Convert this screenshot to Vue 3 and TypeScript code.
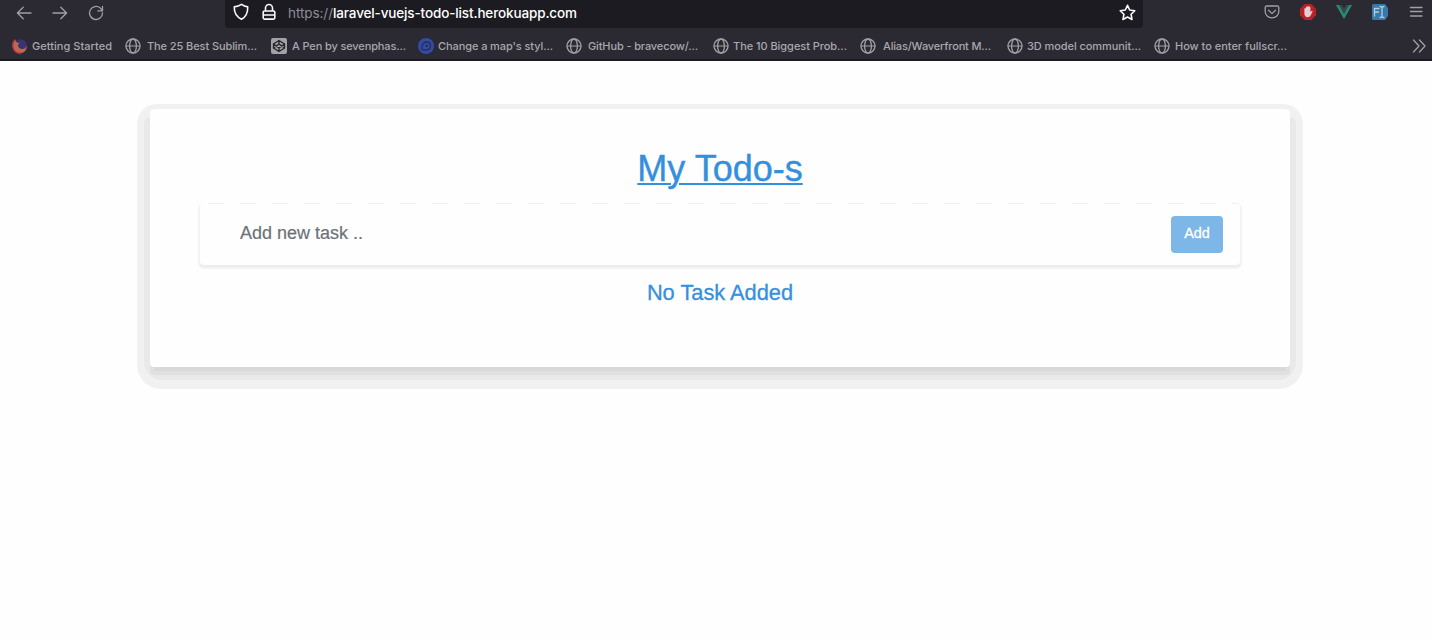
<script setup lang="ts">
import { ref } from 'vue'

interface Bookmark {
  icon: 'firefox' | 'globe' | 'pen' | 'map'
  label: string
  gap: number
  width: number
}

const bookmarks: Bookmark[] = [
  { icon: 'firefox', label: 'Getting Started', gap: 4, width: 80 },
  { icon: 'globe', label: 'The 25 Best Sublim...', gap: 6, width: 110 },
  { icon: 'pen', label: 'A Pen by sevenphas...', gap: 5, width: 114 },
  { icon: 'map', label: "Change a map's styl...", gap: 4, width: 115 },
  { icon: 'globe', label: 'GitHub - bravecow/...', gap: 6, width: 110 },
  { icon: 'globe', label: 'The 10 Biggest Prob...', gap: 4, width: 114 },
  { icon: 'globe', label: 'Alias/Waverfront M...', gap: 7, width: 108 },
  { icon: 'globe', label: '3D model communit...', gap: 4, width: 114 },
  { icon: 'globe', label: 'How to enter fullscr...', gap: 5, width: 112 },
]

const task = ref('')
</script>

<template>
  <div class="window">
    <header class="chrome">
      <div class="toolbar">
        <div class="nav">
          <svg width="16" height="16" viewBox="0 0 16 16"><path d="M15 8H1.5M7.2 2.2 1.4 8l5.8 5.8" /></svg>
          <svg width="16" height="16" viewBox="0 0 16 16"><path d="M1 8h13.5M8.8 2.2 14.6 8l-5.8 5.8" /></svg>
          <svg width="16" height="16" viewBox="0 0 16 16"><path d="M14.500 8a6.500 6.500 0 1 1-2.200-4.900l2 2.200M14.500 1.300v4.600H9.800" /></svg>
        </div>
        <div class="address">
          <svg class="shield" width="16" height="18" viewBox="0 0 16 18"><path d="M8.500 1.400c2 1.500 3.800 2.200 6.200 2.500C15 10 13.200 13.700 8.500 16.300 3.500 13.700 1 10 1.300 3.900 4 3.600 6.300 2.900 8.500 1.400Z" /></svg>
          <svg class="lock" width="14" height="18" viewBox="0 0 14 18"><path d="M3.500 8V5a3.500 3.500 0 0 1 7 0v3M2.500 8h9a1.300 1.300 0 0 1 1.300 1.300v5.500a1.300 1.300 0 0 1-1.300 1.300h-9A1.300 1.300 0 0 1 1.200 14.800V9.300A1.300 1.300 0 0 1 2.500 8ZM1.200 12h11.600" /></svg>
          <svg class="url" width="300" height="24">
            <text x="0" y="16.500" textLength="45" class="scheme">https://</text>
            <text x="45" y="16.500" textLength="244" class="host">laravel-vuejs-todo-list.herokuapp.com</text>
          </svg>
          <svg class="star" width="18" height="18" viewBox="0 0 18 18"><path d="m9.500 1.300 2.200 4.700 5.100.7-3.700 3.600.9 5.200L9.500 13 5 15.500l.9-5.200L2.200 6.700l5.100-.7Z" /></svg>
        </div>
        <div class="extensions">
          <svg width="16" height="16" viewBox="0 0 16 16"><path d="M2.500 2h11A1.300 1.300 0 0 1 14.800 3.300V7.500a6.800 6.300 0 0 1-13.600 0V3.300A1.300 1.300 0 0 1 2.500 2ZM4.500 6.300 8 9.600 11.500 6.300" /></svg>
          <svg width="16" height="16" viewBox="0 0 16 16">
            <path class="blocker" d="M4.700 0h6.600L16 4.700v6.600L11.300 16H4.700L0 11.300V4.700Z" />
            <path class="hand" d="M4.400 7.700V4.500q.8-.9 1.500 0V3q.8-.9 1.500 0v-.6q.8-.9 1.500 0V3q.8-.9 1.500 0v5.200l1-1.200q1.100-.5 1.200.4l-2 4.200Q9.800 13.300 8 13.300c-2.500 0-3.600-1.800-3.600-3.500Z" />
          </svg>
          <svg width="16" height="16" viewBox="0 0 16 16">
            <path class="vue-outer" d="M0 1h3.200L8 9.800 12.800 1H16L8 15Z" />
            <path class="vue-inner" d="M3.200 1h2.700L8 4.800 10.100 1h2.700L8 9.800Z" />
          </svg>
          <svg width="16" height="16" viewBox="0 0 16 16">
            <path class="tag" d="M1.500 0H13l3 4v8l-3 4H1.500Q0 16 0 14.500v-13Q0 0 1.500 0Z" />
            <path class="tag-mark" d="M2.500 12V4.500H7M2.500 8h4M8 2.500q2 0 2 1.200 0-1.200 2-1.200M10 3.700v8.600M8 13.500q2 0 2-1.200 0 1.200 2 1.200" />
          </svg>
          <svg width="16" height="16" viewBox="0 0 16 16"><path d="M2.500 3.500h11.500M2.500 7.500h11.500M2.500 12h11.500" /></svg>
        </div>
      </div>
      <nav class="bookmarks">
        <div v-for="item in bookmarks" :key="item.label" class="bookmark">
          <svg v-if="item.icon === 'globe'" width="16" height="16" viewBox="0 0 16 16"><circle cx="8" cy="8" r="7" /><ellipse cx="8" cy="8" rx="3.400" ry="7" /><path d="M1 8h14" class="thin" /></svg>
          <svg v-else-if="item.icon === 'firefox'" width="16" height="16" viewBox="0 0 16 16">
            <circle class="fox-core" cx="8.500" cy="7.500" r="6.300" />
            <path class="fox-flame" d="M3 1.500C.6 3.600-.2 7.500 1 10.700 2.500 14.500 6 16 9.300 15.300c3.500-.8 5.700-3.800 5.500-7.500-.8 2-2.400 3.300-4.500 3.300-3.200 0-4.600-2.500-4.200-4.500l1.600-1.400-2.900-.8Z" />
            <path class="fox-edge" d="M2.700 2C.8 4.200.2 7.500 1.300 10.500c1.300 3.400 4.500 5 7.700 4.500" />
          </svg>
          <svg v-else-if="item.icon === 'pen'" width="16" height="16" viewBox="0 0 16 16">
            <rect class="pen-tile" width="16" height="16" rx="2" />
            <path class="pen-lines" d="M8 2.500 13.500 6v4L8 13.500 2.500 10V6ZM2.500 6 8 10l5.500-4M2.500 10 8 6l5.500 4M8 2.500V6M8 10v3.500" />
          </svg>
          <svg v-else width="16" height="16" viewBox="0 0 16 16">
            <circle class="map-disc" cx="8" cy="8" r="8" />
            <path class="map-ring" d="M4.300 11.600C3 8 5 4 8.500 4c2.300 0 4 1.600 4 3.800 0 2.600-2.100 4.200-4.700 4.200Z" />
            <circle class="map-dot" cx="8.700" cy="7.700" r="1.200" />
          </svg>
          <svg class="caption" :width="item.width + 4" height="18" :style="{ marginLeft: item.gap + 'px' }">
            <text x="0" y="13.400" :textLength="item.width">{{ item.label }}</text>
          </svg>
        </div>
        <svg class="more" width="14" height="14" viewBox="0 0 14 14"><path d="m1.500 1 5.500 6-5.500 6M7.500 1 13 7l-5.500 6" /></svg>
      </nav>
    </header>

    <main class="card">
      <h1>My Todo-s</h1>
      <form class="entry" @submit.prevent>
        <input v-model="task" type="text" placeholder="Add new task .." />
        <button type="submit">Add</button>
      </form>
      <p>No Task Added</p>
    </main>
  </div>
</template>

<style>
body {
  margin: 0;
  background: #fefefe;
}
</style>

<style scoped>
.window {
  isolation: isolate;
  height: 640px;
  overflow: hidden;
  background: #fefefe;
  font-family: "Liberation Sans", Arial, sans-serif;
}
.chrome {
  box-sizing: border-box;
  height: 61px;
  background: #2b2a33;
  border-bottom: 2px solid #1b1a20;
  font-family: Inter, sans-serif;
}
svg {
  flex: none;
  overflow: visible;
  fill: none;
  stroke: #a09fa5;
  stroke-width: 1.3;
  stroke-linejoin: round;
  stroke-linecap: round;
}
svg text {
  stroke: none;
}
.toolbar {
  display: flex;
  height: 28px;
}
.nav {
  display: flex;
  gap: 20px;
  width: 209px;
  padding: 5px 0 0 16px;
}
.address {
  display: flex;
  box-sizing: border-box;
  width: 918px;
  height: 28px;
  padding-left: 8px;
  background: #1c1b22;
  border-radius: 0 0 4px 4px;
}
.address svg {
  stroke: #fafafa;
  stroke-width: 1.6;
}
.shield {
  margin-top: 3px;
}
.address .lock {
  margin: 3px 0 0 13px;
}
.address .url {
  margin: 1px 0 0 12px;
}
.scheme,
.host {
  font-size: 13.5px;
}
.scheme {
  fill: #8d8c94;
}
.host {
  fill: #fff;
  font-weight: 500;
}
.address .star {
  margin: 4px 0 0 530px;
}
.extensions {
  display: flex;
  gap: 20px;
  padding: 4px 0 0 121px;
}
.extensions .blocker { fill: #b92128; stroke: none; }
.extensions .hand { fill: #e6cdd2; stroke: none; }
.extensions .vue-outer { fill: #2f8b70; stroke: none; }
.extensions .vue-inner { fill: #34495a; stroke: none; }
.extensions .tag { fill: #3779a8; stroke: none; }
.extensions .tag-mark { stroke: #b4cddc; }
.bookmarks {
  display: grid;
  grid-template-columns: 113px 146px 147px 148px 147px 147px 147px 147px 258px 14px;
  align-items: center;
  height: 20px;
  padding: 8px 0 0 12px;
}
.bookmark {
  display: flex;
  align-items: center;
}
.bookmark .thin { stroke-width: 1.2; }
.caption text {
  fill: #a8a7ad;
  font-size: 11px;
  font-weight: 500;
}
.fox-core { fill: #3b3473; stroke: none; }
.fox-flame { fill: #bd6950; stroke: none; }
.fox-edge { stroke: #a83642; }
.pen-tile { fill: #a2a1a5; stroke: none; }
.pen-lines { stroke: #24232a; }
.map-disc { fill: #344ba0; stroke: none; }
.map-ring { stroke: #222c60; }
.map-dot { fill: #222c60; stroke: none; }

.card {
  position: relative;
  box-sizing: border-box;
  width: 1140px;
  height: 258px;
  margin: 48px 0 0 150px;
  padding: 36px 50px 0;
  border-radius: 4px;
  background: #fefefe;
  box-shadow: 0 8px 0 -4px #d9d9d9, 0 8px 0 0 #e1e1e1;
}
/* Outer shadow bands, rounder than the card itself */
.card::before,
.card::after {
  content: "";
  position: absolute;
  z-index: -1;
}
.card::before {
  inset: -5px -13px -22px;
  border-radius: 20px 20px 24px 24px;
  background: #f1f1f1;
}
.card::after {
  inset: 8px -6px -13px;
  border-radius: 6px 6px 18px 18px;
  background: #e9e9e9;
}
h1 {
  height: 48px;
  margin: 0;
  color: #3490dc;
  font-size: 36px;
  font-weight: 400;
  line-height: 48px;
  text-align: center;
  text-decoration: underline;
  text-decoration-thickness: 2px;
  text-underline-offset: 2px;
  -webkit-text-stroke: 0.4px #3490dc;
}
.entry {
  display: flex;
  align-items: center;
  box-sizing: border-box;
  height: 62px;
  margin-top: 10px;
  padding: 0 17px 0 40px;
  border-radius: 4px;
  background: repeating-linear-gradient(90deg, transparent 0 8px, #efefef 8px 24px, transparent 24px 32px) 0 0 / 100% 1px no-repeat, #fefefe;
  box-shadow: 0 2px 0 0 #ececec, 0 2px 0 2px #f3f3f3;
  clip-path: inset(0 -3px -5px);
}
input {
  flex: 1;
  min-width: 0;
  padding: 0 0 1px;
  border: 0;
  outline: 0;
  background: transparent;
  font: 18px "Liberation Sans", Arial, sans-serif;
}
input::placeholder {
  color: #6c7278;
  opacity: 1;
  -webkit-text-stroke: 0.2px #6c7278;
}
button {
  width: 52px;
  height: 37px;
  padding: 0 0 2px;
  border: 0;
  border-radius: 4px;
  background: #7db7e8;
  color: #fff;
  font: 14.4px "Liberation Sans", Arial, sans-serif;
  -webkit-text-stroke: 0.3px #fff;
}
p {
  margin: 14px 0 0;
  color: #3490dc;
  font-size: 21.8px;
  line-height: 28px;
  text-align: center;
  -webkit-text-stroke: 0.3px #3490dc;
}
</style>
